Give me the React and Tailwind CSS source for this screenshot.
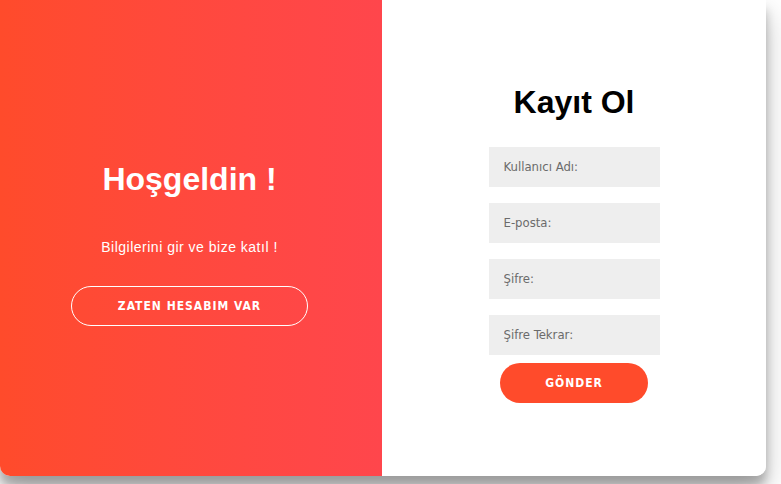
import React from "react";

const fields = ["Kullanıcı Adı:", "E-posta:", "Şifre:", "Şifre Tekrar:"];

export default function App() {
  return (
    <div className="w-[781px] h-[484px] overflow-hidden bg-white">
      <div className="flex w-[766px] h-[476px] rounded-b-[10px] overflow-hidden bg-white shadow-[0_14px_28px_rgba(0,0,0,0.25),0_10px_10px_rgba(0,0,0,0.22)]">
        {/* sol panel */}
        <div className="w-[382px] h-full flex flex-col items-center justify-center pt-[10px] pr-[3px] text-white bg-gradient-to-r from-[#ff4b2b] to-[#ff464c] font-['Liberation_Sans',Arial,sans-serif]">
          <h1 className="text-[32px] leading-[37px] font-bold">Hoşgeldin !</h1>
          <p className="mt-[39px] text-[14px] leading-[20px] tracking-[0.5px]">Bilgilerini gir ve bize katıl !</p>
          <button className="mt-[29px] w-[237px] h-[40px] rounded-full border border-white bg-transparent text-white text-[12px] font-bold tracking-[1px] uppercase font-['DejaVu_Sans_Condensed','DejaVu_Sans',sans-serif]">
            Zaten Hesabım Var
          </button>
        </div>

        {/* sağ panel */}
        <div className="flex-1 h-full flex flex-col items-center justify-center pt-[10px] bg-white">
          <h1 className="text-[32px] leading-[37px] font-bold text-black font-['Liberation_Sans',Arial,sans-serif]">Kayıt Ol</h1>
          <div className="mt-[26px] flex flex-col gap-4">
            {fields.map((f) => (
              <input
                key={f}
                type="text"
                placeholder={f}
                className="w-[171px] h-[40px] px-[15px] bg-[#eeeeee] outline-none text-[13px] text-[#333] placeholder:text-[#6b6b6b] font-['DejaVu_Sans_Condensed','DejaVu_Sans',sans-serif]"
              />
            ))}
          </div>
          <button className="mt-2 w-[148px] h-[40px] rounded-full bg-[#ff4b2b] text-white text-[12px] font-bold tracking-[1px] font-['DejaVu_Sans_Condensed','DejaVu_Sans',sans-serif]">
            GÖNDER
          </button>
        </div>
      </div>
    </div>
  );
}
